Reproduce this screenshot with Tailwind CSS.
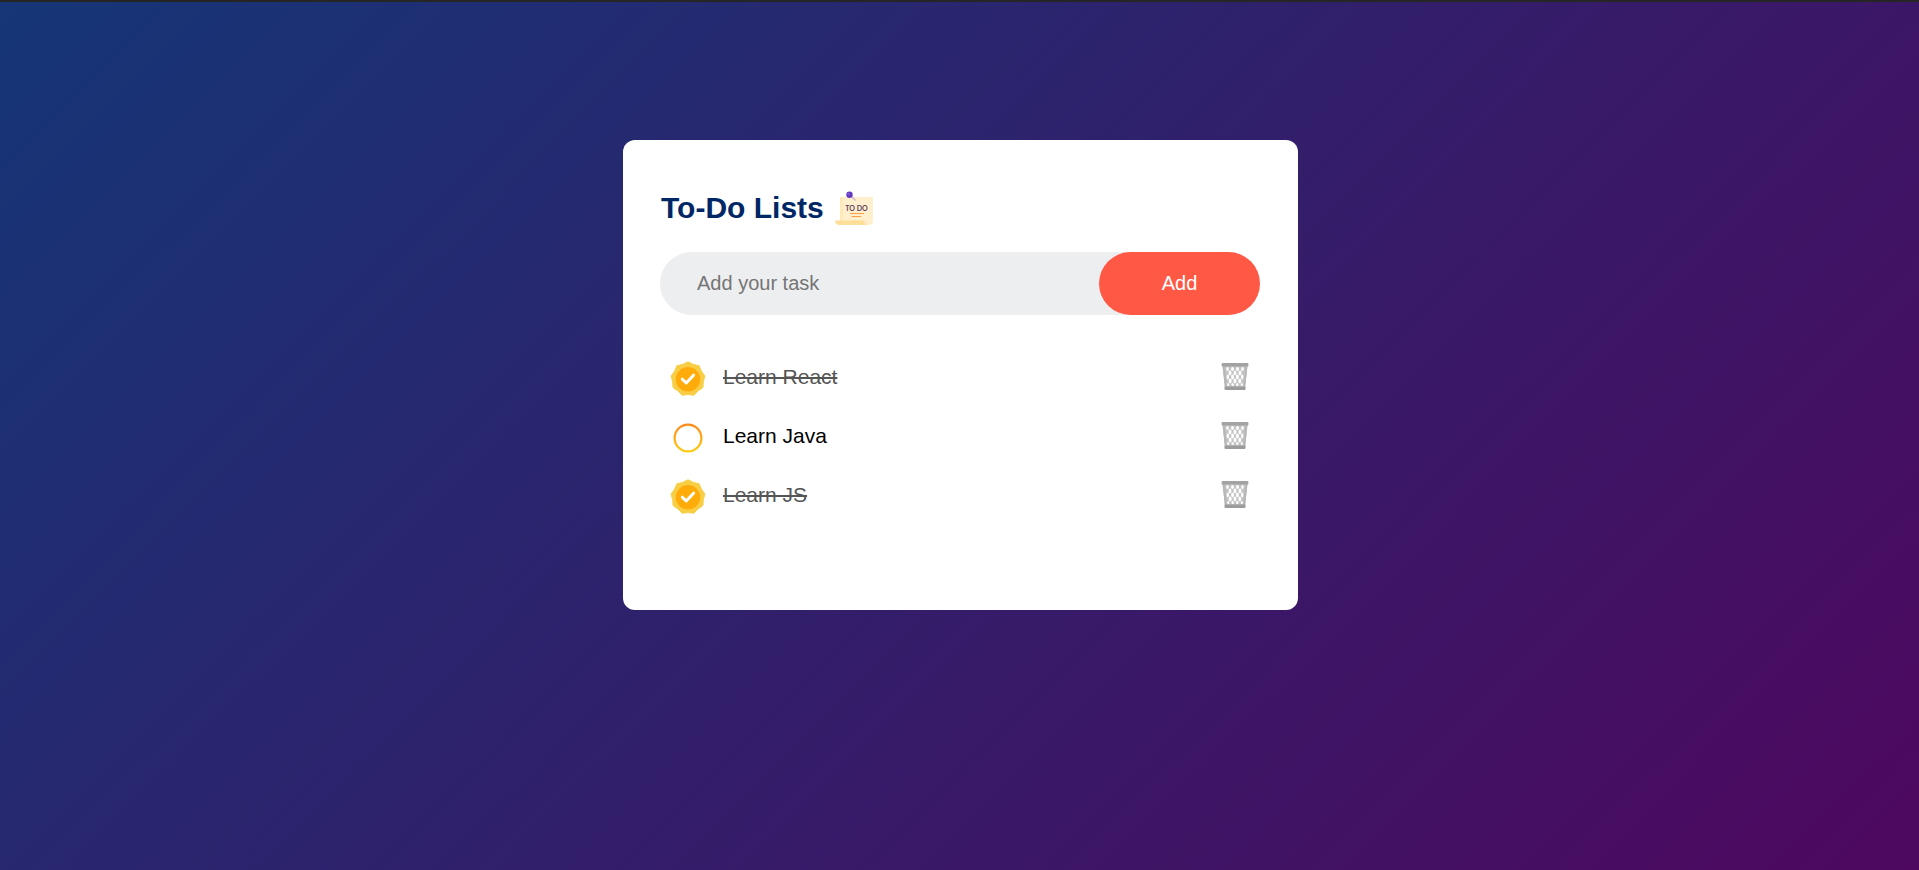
<!DOCTYPE html>
<html lang="en">
<head>
<meta charset="UTF-8">
<meta name="viewport" content="width=device-width, initial-scale=1">
<title>To-Do Lists</title>
<script src="https://cdn.jsdelivr.net/npm/@tailwindcss/browser@4"></script>
</head>
<body class="font-['Liberation_Sans',Arial,sans-serif]">
<svg class="absolute size-0" aria-hidden="true">
  <defs>
    <linearGradient id="ring" x1="0" y1="0" x2="0" y2="1">
      <stop offset="0" stop-color="#ff8a1a"/><stop offset="1" stop-color="#ffc90c"/>
    </linearGradient>
    <symbol id="done" viewBox="0 -2 36 36" overflow="visible">
      <path d="M18 0.800 23.300 3.400 29.100 4.800 31.400 10.300 34.900 15 33.300 20.700 32.900 26.600 28 29.900 23.900 34.200 18 33.500 12.100 34.200 8 29.900 3.100 26.600 2.700 20.700 1.100 15 4.600 10.300 6.900 4.800 12.700 3.400Z" fill="#f8ce44" stroke="#f8ce44" stroke-width="1" stroke-linejoin="round"/>
      <circle cx="18" cy="18.300" r="12.200" fill="#ffab0a"/>
      <path d="M12.300 18.200 16.200 22 23.600 14.200" fill="none" stroke="#fff" stroke-width="3" stroke-linecap="round" stroke-linejoin="round"/>
    </symbol>
    <symbol id="open" viewBox="0 -2 36 36" overflow="visible">
      <circle cx="18" cy="18" r="13.400" fill="none" stroke="url(#ring)" stroke-width="2.200"/>
    </symbol>
    <symbol id="bin" viewBox="0 0 28 30">
      <path d="M1.500 4H26.500L24 26H4Z" fill="#c2c2c2"/>
      <g fill="#fff">
        <ellipse cx="6.500" cy="7" rx="1.300" ry="2"/><ellipse cx="11.500" cy="7" rx="1.500" ry="2"/><ellipse cx="16.500" cy="7" rx="1.500" ry="2"/><ellipse cx="21.500" cy="7" rx="1.300" ry="2"/>
        <ellipse cx="9" cy="11" rx="1.500" ry="2.400"/><ellipse cx="14" cy="11" rx="1.500" ry="2.400"/><ellipse cx="19" cy="11" rx="1.500" ry="2.400"/>
        <ellipse cx="6.800" cy="15" rx="1.200" ry="2.400"/><ellipse cx="11.600" cy="15" rx="1.500" ry="2.400"/><ellipse cx="16.400" cy="15" rx="1.500" ry="2.400"/><ellipse cx="21.200" cy="15" rx="1.200" ry="2.400"/>
        <ellipse cx="9.200" cy="19" rx="1.500" ry="2.400"/><ellipse cx="14" cy="19" rx="1.500" ry="2.400"/><ellipse cx="18.800" cy="19" rx="1.500" ry="2.400"/>
        <ellipse cx="7.200" cy="22.600" rx="1" ry="1.700"/><ellipse cx="11.700" cy="22.600" rx="1.200" ry="1.700"/><ellipse cx="16.300" cy="22.600" rx="1.200" ry="1.700"/><ellipse cx="20.800" cy="22.600" rx="1" ry="1.700"/>
      </g>
      <path d="M2.500 4 4.800 26M25.500 4 23.200 26" stroke="#b6b6b6" stroke-width="1.800"/>
      <rect x="0.600" y="1" width="26.800" height="3.600" rx="1" fill="#a3a3a3"/>
      <rect x="3.500" y="24.600" width="21" height="3.400" rx="1" fill="#9c9c9c"/>
    </symbol>
  </defs>
</svg>
<div class="min-h-screen border-t-2 border-[#252525] bg-[linear-gradient(135deg,#153677,#4e085f)] bg-origin-border pt-[138px] pr-3 pb-5 pl-[14px]">
  <main class="mx-auto w-full max-w-[675px] rounded-xl bg-white pt-[50px] pr-[38px] pb-[86px] pl-[37px]">
    <h1 class="flex h-9 items-center gap-[10px] pl-px text-[30px] leading-9 font-bold text-[#002765]">
      To-Do Lists
      <svg class="h-9 w-10" viewBox="0 0 40 36" aria-hidden="true">
        <path d="M6 7H39V31Q39 35 34.500 35H9Q6 35 6 31Z" fill="#ffefcc"/>
        <path d="M6 7H9V31H6Z" fill="#ffe9b8"/>
        <path d="M1 30.500H29.500Q30 34.500 34.500 35H6Q1 35 1 30.500Z" fill="#ffdf98"/>
        <path d="M29.500 30.500Q33 29.500 33.500 33L34.500 35Q30 34.500 29.500 30.500Z" fill="#ffeabf"/>
        <path d="M17 6 21.500 10.500" stroke="#cdb3cf" stroke-width="1.300"/>
        <circle cx="15.500" cy="4.800" r="3.200" fill="#6338bd"/><circle cx="14.500" cy="4" r="1.200" fill="#8560d8"/>
        <text x="22.500" y="21" text-anchor="middle" font-family="Lato, sans-serif" font-size="7" font-weight="700" fill="#60405f">TO DO</text>
        <path d="M16.500 23.500H29.500M18 26.500H26.500" stroke="#ff9d45" stroke-width="1.200" stroke-linecap="round"/>
      </svg>
    </h1>
    <form class="mt-[26px] mb-8 flex items-center rounded-full bg-[#edeef0]" onsubmit="return false">
      <input type="text" aria-label="Add your task" placeholder="Add your task" class="min-w-0 flex-1 bg-transparent py-[18px] pl-[37px] text-xl leading-[27px] text-black outline-none placeholder:text-[#757575]">
      <button type="submit" class="w-[161px] shrink-0 cursor-pointer rounded-full bg-[#ff5945] py-[18px] text-xl leading-[27px] text-white">Add</button>
    </form>
    <ul class="text-[21px] leading-6">
      <li class="flex h-[59px] items-center justify-between pr-[11px] pl-[10px]">
        <label class="relative flex cursor-pointer items-center gap-[17px] text-[#555] line-through"><input type="checkbox" checked class="sr-only"><svg class="size-9 overflow-visible" aria-hidden="true"><use href="#done"/></svg>Learn React</label>
        <button type="button" aria-label="Delete Learn React" class="cursor-pointer"><svg class="h-[30px] w-7" aria-hidden="true"><use href="#bin"/></svg></button>
      </li>
      <li class="flex h-[59px] items-center justify-between pr-[11px] pl-[10px]">
        <label class="relative flex cursor-pointer items-center gap-[17px] text-black"><input type="checkbox" class="sr-only"><svg class="size-9 overflow-visible" aria-hidden="true"><use href="#open"/></svg>Learn Java</label>
        <button type="button" aria-label="Delete Learn Java" class="cursor-pointer"><svg class="h-[30px] w-7" aria-hidden="true"><use href="#bin"/></svg></button>
      </li>
      <li class="flex h-[59px] items-center justify-between pr-[11px] pl-[10px]">
        <label class="relative flex cursor-pointer items-center gap-[17px] text-[#555] line-through"><input type="checkbox" checked class="sr-only"><svg class="size-9 overflow-visible" aria-hidden="true"><use href="#done"/></svg>Learn JS</label>
        <button type="button" aria-label="Delete Learn JS" class="cursor-pointer"><svg class="h-[30px] w-7" aria-hidden="true"><use href="#bin"/></svg></button>
      </li>
    </ul>
  </main>
</div>
</body>
</html>
